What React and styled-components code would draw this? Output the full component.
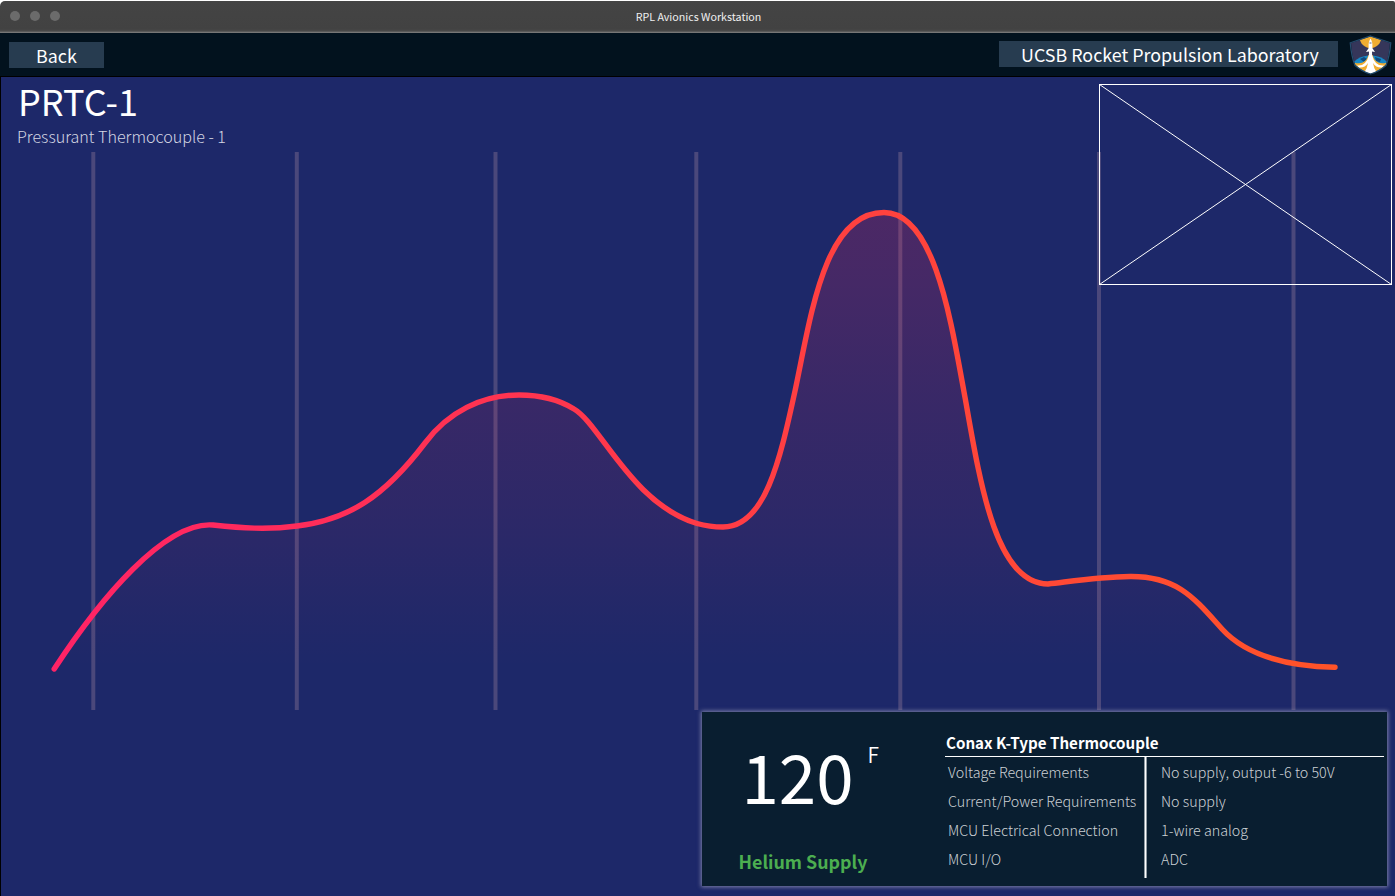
import React from 'react';
import styled, { createGlobalStyle } from 'styled-components';

const GlobalStyle = createGlobalStyle`
  * { box-sizing: border-box; }
  body {
    margin: 0;
    background: #fff;
    overflow: hidden;
    font-family: "Noto Sans CJK SC", "Noto Sans", sans-serif;
    color: #fff;
  }
`;

const Window = styled.div`
  display: flex;
  flex-direction: column;
  width: 1395px;
  height: 896px;
  padding-top: 1px;
`;

const TitleBar = styled.header`
  display: grid;
  grid-template-columns: 1fr auto 1fr;
  align-items: center;
  height: 32px;
  padding: 0 0 2px 10px;
  background: linear-gradient(#444 0, #424242 28px, #4a4a4a 30px, #858585 32px);
  border-radius: 5px 2px 0 0;
`;

const Lights = styled.div`
  display: flex;
  gap: 10px;
`;

const Light = styled.span`
  width: 10px;
  height: 10px;
  border-radius: 50%;
  background: #6b6b6b;
`;

const WindowTitle = styled.span`
  font-size: 10.7px;
  line-height: 16px;
  color: #f0f0f0;
  margin-right: 8px;
  padding-top: 2px;
`;

const NavBar = styled.nav`
  display: flex;
  align-items: flex-start;
  justify-content: space-between;
  height: 44px;
  padding: 0 3px 0 9px;
  background: #02121e;
  border-bottom: 1px solid #000;
`;

const Label = styled.div`
  width: ${(p) => p.$width}px;
  height: 26px;
  margin-top: ${(p) => p.$top}px;
  padding-left: ${(p) => p.$indent}px;
  background: #273c50;
  font-size: 17.87px;
  line-height: 27px;
  white-space: nowrap;
`;

const Brand = styled.div`
  display: flex;
  gap: 11px;
`;

const Logo = styled.svg`
  width: 43px;
  height: 40px;
  margin-top: 2px;
`;

const Main = styled.main`
  position: relative;
  flex: 1;
  display: flex;
  flex-direction: column;
  background: #1d2869;
  border-left: 1px solid #000;
`;

const Heading = styled.div`
  height: 75px;
  padding-left: 16px;
`;

const Title = styled.h1`
  margin: 0;
  padding: 2px 0 0 1px;
  font-size: 36px;
  line-height: 42px;
  font-weight: 400;
`;

const Subtitle = styled.p`
  margin: 0;
  padding-top: 2px;
  font-size: 16.1px;
  line-height: 26px;
  font-weight: 300;
  color: #d4d6e3;
`;

const Chart = styled.svg`
  display: block;
  width: 1394px;
  height: 558px;
`;

const Placeholder = styled.svg`
  position: absolute;
  top: 7px;
  right: 3px;
  width: 293px;
  height: 201px;
`;

const Panel = styled.section`
  display: flex;
  align-self: flex-end;
  width: 685px;
  height: 174px;
  margin: 2px 8px 0 0;
  background: #091e30;
  box-shadow: 0 0 4px 1px rgba(160, 160, 190, 0.75);
`;

const Reading = styled.div`
  display: flex;
  flex-direction: column;
  justify-content: space-between;
  width: 242px;
  padding: 21px 0 11px 36.5px;
`;

const Value = styled.div`
  display: flex;
  align-items: flex-start;
  gap: 14px;
  padding-left: 3px;
  font-size: 67.3px;
  line-height: 84px;
`;

const Unit = styled.span`
  padding-top: 7px;
  font-size: 21px;
  line-height: 28px;
  font-weight: 350;
`;

const Supply = styled.div`
  font-size: 17.87px;
  line-height: 28px;
  font-weight: 700;
  color: #4cae50;
`;

const Specs = styled.div`
  width: 439px;
  margin-left: 1px;
  padding-top: 18px;
`;

const SpecTitle = styled.h2`
  margin: 0;
  padding-left: 1px;
  height: 27px;
  border-bottom: 1px solid #fff;
  font-size: 15.15px;
  line-height: 24px;
  font-weight: 700;
`;

const SpecTable = styled.div`
  display: grid;
  grid-template-columns: 199px 3px 1fr;
  height: 121px;
`;

const Column = styled.div`
  padding-left: ${(p) => p.$indent}px;
`;

const Divider = styled.div`
  background: #fff;
  border: solid #8f9aa2;
  border-width: 0 1px;
`;

const Cell = styled.div`
  height: 29px;
  font-size: 14.3px;
  line-height: 29px;
  font-weight: 300;
  color: #ccd1d5;
  white-space: nowrap;
`;

const GRID = [93.3, 296.8, 495.5, 696.3, 900.3, 1099, 1293.5];

const CURVE =
  'M54.2 669 C100 599 165 521 213 525 C241 528 267 530 297 526 C348 520 384 497 425 443 ' +
  'C448 412 482 395 519 395 C540 395 558 399 574 409 C600 424 632 504 697 523.5 ' +
  'C706 526 715 527 723 527 C765 527 780 460 795 391 C811 316 824 212.5 884 212.5 ' +
  'C936 212.5 952 328 965.5 400 C981 489 997 584 1048 584 ' +
  'C1074 581 1099 577 1130 576.5 C1178 576 1195 599 1222 629 C1243 652 1280 666 1335 667.3';

const SPECS = [
  ['Voltage Requirements', 'No supply, output -6 to 50V'],
  ['Current/Power Requirements', 'No supply'],
  ['MCU Electrical Connection', '1-wire analog'],
  ['MCU I/O', 'ADC'],
];

function RocketLogo() {
  return (
    <Logo viewBox="0 0 43 40">
      <defs>
        <clipPath id="shield">
          <path d="M21.5 1.5 L41 8 Q40 22 36.5 30 Q30 36 21.5 38.5 Q13 36 6.5 30 Q3 22 2 8 Z" />
        </clipPath>
      </defs>
      <g clipPath="url(#shield)">
        <rect width="43" height="40" fill="#35365a" />
        <circle cx="21.5" cy="2.5" r="10.7" fill="#f0ad32" />
        <ellipse cx="21.5" cy="33" rx="19" ry="12.5" fill="#1688c7" />
        <path d="M11 24 l4-2 3 2 -3 3z M26 22 l6 2 -1 3 -4-1z" fill="#12497d" />
        <path d="M5 27.5 Q16 31 19.5 20 H23.5 Q27 31 38 27.5 L36 40 H7z" fill="#f0ad32" />
        <path d="M8 30.5 Q17 31.5 20 20 H23 Q26 31.5 35 30.5 L33 32.5 Q27 33 24 28 Q24.5 33 28 38 H15 Q18.5 33 19 28 Q16 33 10 32.5z" fill="#fff" />
      </g>
      <path d="M21.5 3.5 Q23.9 7 23.3 13 L26 17 L23 16.5 L23.3 28 Q24 34 27 36.5 L21.5 38.5 L16 36.5 Q19 34 19.7 28 L20 16.5 L17 17 L19.7 13 Q19.1 7 21.5 3.5z" fill="#fff" />
      <path d="M20.5 8 h2" stroke="#35365a" strokeWidth="0.8" />
      <path d="M21.5 1 L41.8 7.8 Q40.5 22 37 30.5 Q30 36.5 21.5 39 Q13 36.5 6 30.5 Q2.5 22 1.2 7.8 Z" fill="none" stroke="#254e70" strokeWidth="1.2" />
    </Logo>
  );
}

export default function App() {
  return (
    <Window>
      <GlobalStyle />
      <TitleBar>
        <Lights>
          <Light />
          <Light />
          <Light />
        </Lights>
        <WindowTitle>RPL Avionics Workstation</WindowTitle>
      </TitleBar>
      <NavBar>
        <Label $width={95} $top={9} $indent={27}>Back</Label>
        <Brand>
          <Label $width={339} $top={8} $indent={22}>UCSB Rocket Propulsion Laboratory</Label>
          <RocketLogo />
        </Brand>
      </NavBar>
      <Main>
        <Heading>
          <Title>PRTC-1</Title>
          <Subtitle>Pressurant Thermocouple - 1</Subtitle>
        </Heading>
        <Chart viewBox="1 152 1394 558">
          <defs>
            <linearGradient id="stroke" gradientUnits="userSpaceOnUse" x1="54" y1="0" x2="1335" y2="0">
              <stop offset="0" stopColor="#ff2366" />
              <stop offset="1" stopColor="#ff5328" />
            </linearGradient>
            <linearGradient id="area" gradientUnits="userSpaceOnUse" x1="0" y1="212" x2="0" y2="668">
              <stop offset="0" stopColor="#ff2b58" stopOpacity="0.21" />
              <stop offset="1" stopColor="#ff2b58" stopOpacity="0" />
            </linearGradient>
          </defs>
          {GRID.map((x) => (
            <path key={x} d={`M${x} 152V710`} stroke="#4b487b" strokeWidth="4" />
          ))}
          <path d={`${CURVE} Z`} fill="url(#area)" />
          <path d={CURVE} fill="none" stroke="url(#stroke)" strokeWidth="5.4" strokeLinecap="round" />
        </Chart>
        <Panel>
          <Reading>
            <Value>
              120<Unit>F</Unit>
            </Value>
            <Supply>Helium Supply</Supply>
          </Reading>
          <Specs>
            <SpecTitle>Conax K-Type Thermocouple</SpecTitle>
            <SpecTable>
              <Column $indent={3}>
                {SPECS.map(([name]) => <Cell key={name}>{name}</Cell>)}
              </Column>
              <Divider />
              <Column $indent={14}>
                {SPECS.map(([name, value]) => <Cell key={name}>{value}</Cell>)}
              </Column>
            </SpecTable>
          </Specs>
        </Panel>
        <Placeholder viewBox="0 0 293 201" fill="none" stroke="#fff">
          <rect x="0.5" y="0.5" width="292" height="200" />
          <path d="M0.5 0.5L292.5 200.5M292.5 0.5L0.5 200.5" />
        </Placeholder>
      </Main>
    </Window>
  );
}
